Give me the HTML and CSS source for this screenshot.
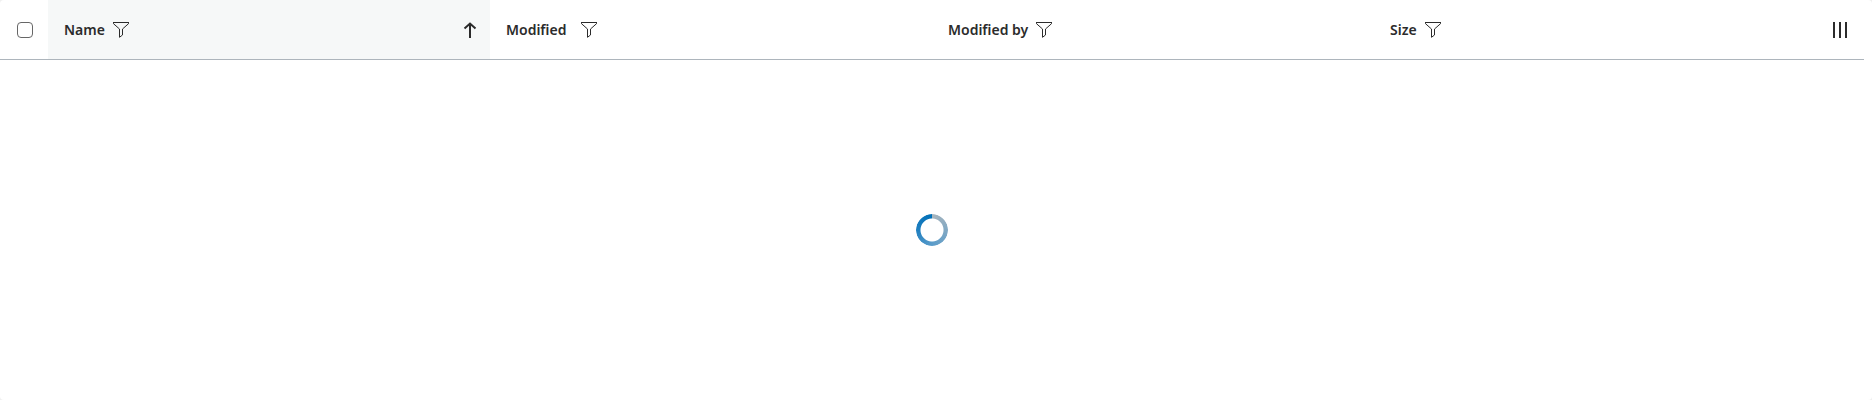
FILE: index.html
```html
<!DOCTYPE html>
<html lang="en">
<head>
<meta charset="utf-8">
<title>Files</title>
<link rel="stylesheet" href="styles.css">
</head>
<body>
<svg class="sprite" aria-hidden="true">
  <symbol id="filter" viewBox="0 0 16 16"><path d="M.5 .5h15v1.200L9.500 7v6L6.500 15.300V7L.5 1.700z" fill="none" stroke="currentColor"/><path d="M0 .5h16" stroke="currentColor"/></symbol>
</svg>
<main class="panel">
  <table class="files">
    <thead>
      <tr>
        <th class="edge"><div class="head head-center"><input class="check" type="checkbox" aria-label="Select all"></div></th>
        <th class="column sorted" aria-sort="ascending">
          <div class="head">
            <span>Name</span>
            <button class="icon-button" aria-label="Filter Name"><svg class="icon"><use href="#filter"/></svg></button>
            <button class="icon-button sort" aria-label="Sort Name"><svg class="icon" viewBox="0 0 16 16" fill="none" stroke="currentColor" stroke-width="2"><path d="M8 16V1.500M2.500 6.500L8 1.500l5.500 5"/></svg></button>
          </div>
        </th>
        <th class="column"><div class="head head-wide"><span>Modified</span><button class="icon-button" aria-label="Filter Modified"><svg class="icon"><use href="#filter"/></svg></button></div></th>
        <th class="column"><div class="head"><span>Modified by</span><button class="icon-button" aria-label="Filter Modified by"><svg class="icon"><use href="#filter"/></svg></button></div></th>
        <th class="column"><div class="head"><span>Size</span><button class="icon-button" aria-label="Filter Size"><svg class="icon"><use href="#filter"/></svg></button></div></th>
        <th class="edge"><div class="head head-center"><button class="icon-button" aria-label="Choose columns"><svg class="icon" viewBox="0 0 16 16" fill="currentColor"><path d="M1 0h2v16H1zM7 0h2v16H7zM13 0h2v16h-2z"/></svg></button></div></th>
      </tr>
    </thead>
  </table>
  <div class="loading"><div class="spinner" role="status" aria-label="Loading"></div></div>
</main>
</body>
</html>
```
FILE: styles.css
```css
* { box-sizing: border-box; }

body {
  margin: 0;
  background: #f0f0f0;
  color: #2b2b2b;
  font-family: "Noto Sans", "Open Sans", sans-serif;
  font-size: 14px;
  font-weight: 600;
  line-height: 20px;
}

.sprite { display: none; }

.panel {
  display: flex;
  flex-direction: column;
  min-height: 100vh;
  padding-right: 8px;
  border-radius: 4px;
  background: #fff;
}

.files {
  width: 100%;
  table-layout: fixed;
  border-collapse: separate;
  border-spacing: 0;
}

.files th {
  height: 60px;
  padding: 0;
  border-bottom: 1px solid #adb5bc;
  font-weight: 600;
  text-align: left;
}

.files .edge { width: 48px; }
.files .column { padding: 0 12px 0 16px; }
.files .sorted { background: #f6f8f8; }

.head { display: flex; align-items: center; gap: 8px; height: 20px; }
.head-wide { gap: 15px; }
.head-center { justify-content: center; }
.sort { margin-left: auto; }

.icon-button {
  display: flex;
  padding: 0;
  border: 0;
  background: none;
  color: #2b2b2b;
}

.icon { display: block; width: 16px; height: 16px; }

.check {
  appearance: none;
  width: 16px;
  height: 16px;
  margin: 0 0 0 2px;
  border: 1px solid #666;
  border-radius: 4px;
  background: #fff;
}

.loading {
  display: flex;
  flex: 1;
  align-items: center;
  justify-content: center;
}

.spinner {
  width: 32px;
  height: 32px;
  border-radius: 50%;
  background: conic-gradient(#a9b5bd, #5a9cca 50%, #1f7fc0 75%, #0070b8);
  mask: radial-gradient(circle, transparent 11px, #000 12px);
}
```
